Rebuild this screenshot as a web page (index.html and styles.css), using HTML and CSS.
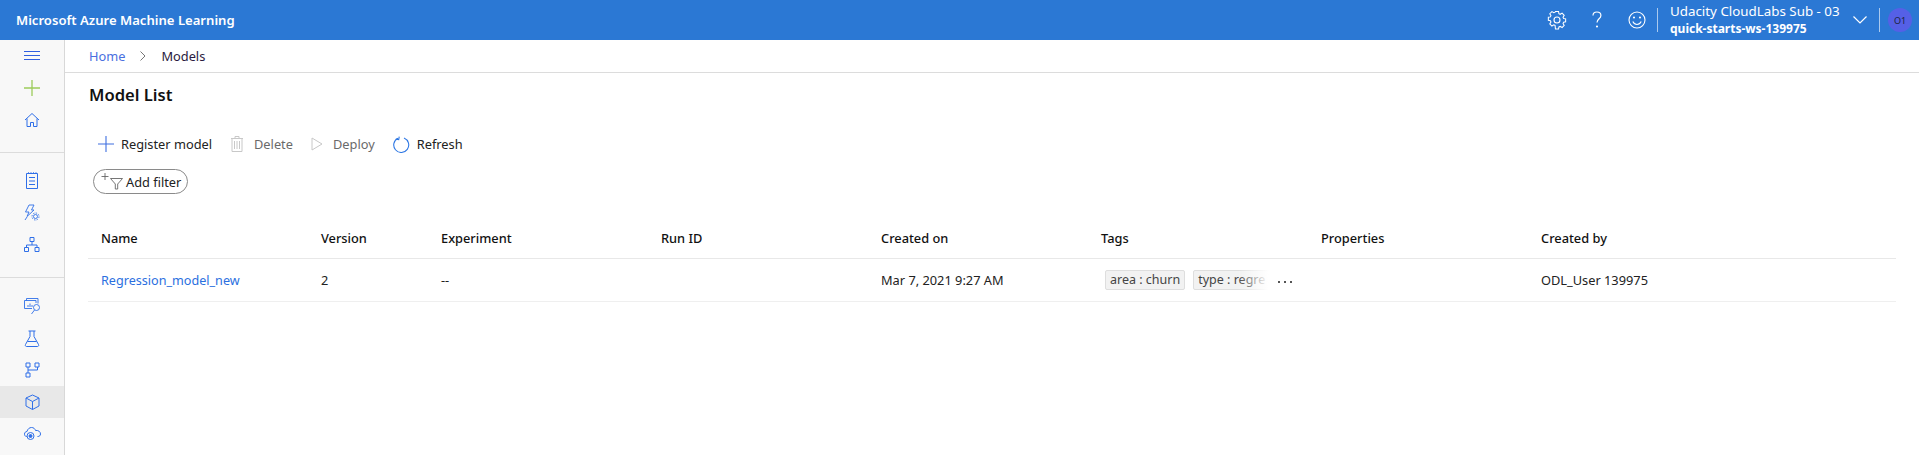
FILE: index.html
```html
<!doctype html>
<html lang="en">
  <head>
    <meta charset="utf-8">
    <title>Model List - Microsoft Azure Machine Learning</title>
    <link rel="stylesheet" href="styles.css">
  </head>
  <body>
    <header class="topbar">
      <div class="brand">Microsoft Azure Machine Learning</div>
      <div class="top-actions">
        <button class="top-icon">
          <svg width="20" height="20" viewBox="0 0 20 20" fill="none" stroke="#fff" stroke-width="1.1"><path d="M8.4 2h3.2l.4 2.3 1.3.6 2-1.2 2.2 2.2-1.2 2 .6 1.3 2.100.4v3.200l-2.100.4-.6 1.300 1.200 2-2.200 2.200-2-1.200-1.300.6-.4 2.100H8.400L8 16.500l-1.300-.6-2 1.200-2.200-2.200 1.200-2-.6-1.300L1 11.200V8l2.100-.4.6-1.300-1.200-2 2.200-2.200 2 1.200L8 2.700z" transform="translate(.4 -.4) scale(.96)"/><circle cx="10" cy="10" r="3"/></svg>
        </button>
        <button class="top-icon">
          <svg width="20" height="20" viewBox="0 0 20 20" fill="none" stroke="#fff" stroke-width="1.200"><path d="M6 5.500C6 3.300 7.700 2 9.900 2c2.300 0 4 1.400 4 3.400 0 3.400-3.900 3.300-3.900 7.100"/><circle cx="10" cy="16.500" r=".5"/></svg>
        </button>
        <button class="top-icon">
          <svg width="20" height="20" viewBox="0 0 20 20" fill="none" stroke="#fff" stroke-width="1.100"><circle cx="10" cy="10" r="8"/><path d="M5.800 11.500c1 2 2.500 3 4.200 3s3.200-1 4.200-3"/><circle cx="7" cy="7.500" r=".5"/><circle cx="13" cy="7.500" r=".5"/></svg>
        </button>
        <div class="top-sep"></div>
        <div class="workspace">
          <div class="sub-name">Udacity CloudLabs Sub - 03</div>
          <div class="ws-name">quick-starts-ws-139975</div>
        </div>
        <svg class="chevron" width="16" height="10" viewBox="0 0 16 10" fill="none" stroke="#fff" stroke-width="1.200"><path d="M1.500 1.500 8 8l6.500-6.500"/></svg>
        <div class="top-sep"></div>
        <div class="avatar">O1</div>
      </div>
    </header>

    <div class="shell">
      <nav class="sidebar">
        <div class="nav-group first">
          <div class="nav-item">
            <svg width="16" height="10" viewBox="0 0 16 10" fill="none" stroke="#2f5fe0"><path d="M0 .500h16M0 4.500h16M0 8.500h16"/></svg>
          </div>
          <div class="nav-item">
            <svg width="18" height="18" viewBox="0 0 18 18" fill="none" stroke="#9ccb5a" stroke-width="1.300"><path d="M9 1v16M1 9h16"/></svg>
          </div>
          <div class="nav-item">
            <svg width="16" height="16" viewBox="0 0 16 16" fill="none" stroke="#2f6fe8"><path d="M1 8 8 1.500 15 8M3 6.500v8h3.500v-4h3v4H13v-8"/></svg>
          </div>
        </div>
        <div class="nav-group">
          <div class="nav-item">
            <svg width="14" height="18" viewBox="0 0 14 18" fill="none" stroke="#2f6fe8"><path d="M1.500 1.500h11v15h-11zM4 5.500h6M4 9h6M4 12.500h6"/><path d="M3.500 0v2M6 0v2M8.500 0v2M11 0v2" stroke-width=".7"/></svg>
          </div>
          <div class="nav-item">
            <svg width="16" height="18" viewBox="0 0 16 18" fill="none" stroke="#2f6fe8" stroke-width=".9"><path d="M5 1h5L7.500 6H10l-7 6.500L5 8H1.500zM3 13l-2 3"/><circle cx="11.500" cy="12.500" r="2"/><circle cx="11.500" cy="12.500" r="3.500" stroke-dasharray="1.500 1.200"/></svg>
          </div>
          <div class="nav-item">
            <svg width="16" height="16" viewBox="0 0 16 16" fill="none" stroke="#2f6fe8"><path d="M6 .5h4v4H6zM.5 10.500h4v4h-4zM11 10.500h4v4h-4zM8 4.500V8M2.500 10.500V8h10.500v2.500"/></svg>
          </div>
        </div>
        <div class="nav-group">
          <div class="nav-item">
            <svg width="17" height="17" viewBox="0 0 17 17" fill="none" stroke="#2f6fe8" stroke-width=".9"><path d="M2.500 2.500V.5H14v5M.5 2.500H12v2.500M.5 2.500v8H8"/><path d="M4 9V7M6 9V5.500M8 9V7"/><circle cx="12.500" cy="9.500" r="3"/><path d="M10.500 12 7.500 16"/></svg>
          </div>
          <div class="nav-item">
            <svg width="16" height="17" viewBox="0 0 16 17" fill="none" stroke="#2f6fe8"><path d="M4.500 1h7M6 1v5.500L1.500 14.500c-.5 1 0 2 1 2h11c1 0 1.500-1 1-2L10 6.500V1M3.500 11.500h9"/></svg>
          </div>
          <div class="nav-item">
            <svg width="15" height="16" viewBox="0 0 15 16" fill="none" stroke="#2f6fe8"><path d="M1 1h4v4H1zM10 1h4v4h-4zM1 11h4v4H1zM3 5v6M3 8h9.500V5"/></svg>
          </div>
          <div class="nav-item active">
            <svg width="15" height="16" viewBox="0 0 15 16" fill="none" stroke="#2f6fe8"><path d="M7.500 1 14 4v8l-6.500 3.500L1 12V4zM1 4l6.500 3.500L14 4M7.500 7.500v8"/></svg>
          </div>
          <div class="nav-item">
            <svg width="17" height="14" viewBox="0 0 17 14" fill="none" stroke="#2f6fe8"><path d="M3 9.500H2.500C1 9.500.5 8 .5 7c0-1.500 1.200-2.500 2.500-2.500C3.500 2 5.500.5 7.500.5c2 0 3.500 1.200 4 3 2.500-.5 5 1 5 3.500 0 1.500-1 2.500-3 2.500"/><circle cx="6.500" cy="9" r="3.500"/><circle cx="6.500" cy="9" r="1.500" fill="#2f6fe8"/></svg>
          </div>
        </div>
      </nav>

      <main class="content">
        <div class="breadcrumb">
          <a class="crumb-link">Home</a>
          <svg width="6" height="10" viewBox="0 0 6 10" fill="none" stroke="#777"><path d="m.5.500 4.500 4.500-4.500 4.500"/></svg>
          <span class="crumb-current">Models</span>
        </div>

        <h1 class="page-title">Model List</h1>

        <div class="toolbar">
          <button class="tool first">
            <svg width="18" height="18" viewBox="0 0 18 18" fill="none" stroke="#3f6fe0" stroke-width="1.100"><path d="M9 1v16M1 9h16"/></svg>
            Register model
          </button>
          <button class="tool disabled">
            <svg width="14" height="16" viewBox="0 0 14 16" fill="none" stroke="#c8c8c8"><path d="M1 2.500h12M2 2.500v13h10v-13M5 2.500V.5h4v2M4.500 5v8M7 5v8M9.500 5v8"/></svg>
            Delete
          </button>
          <button class="tool disabled">
            <svg width="12" height="14" viewBox="0 0 12 14" fill="none" stroke="#c8c8c8"><path d="M1 1 11 7 1 13z"/></svg>
            Deploy
          </button>
          <button class="tool refresh">
            <svg width="17" height="17" viewBox="0 0 17 17" fill="none" stroke="#2f78e4" stroke-width="1.100"><path d="M11 2A7.500 7.500 0 1 1 5 2.200"/><path d="M6 .5v3H3" transform="rotate(10 5 2)"/></svg>
            Refresh
          </button>
        </div>

        <button class="filter-pill">
          <svg width="23" height="17" viewBox="0 0 23 17" fill="none" stroke="#666" stroke-width=".9"><path d="M4 0v7M.5 3.500h7"/><path d="M9.500 5.500h12l-4.800 5.500v5h-2.400v-5z"/></svg>
          Add filter
        </button>

        <div class="table">
          <div class="row head">
            <div class="cell">Name</div>
            <div class="cell">Version</div>
            <div class="cell">Experiment</div>
            <div class="cell">Run ID</div>
            <div class="cell">Created on</div>
            <div class="cell">Tags</div>
            <div class="cell">Properties</div>
            <div class="cell">Created by</div>
          </div>
          <div class="row body">
            <div class="cell"><a class="model-link">Regression_model_new</a></div>
            <div class="cell">2</div>
            <div class="cell">--</div>
            <div class="cell"></div>
            <div class="cell">Mar 7, 2021 9:27 AM</div>
            <div class="cell tags">
              <span class="tag">area : churn</span>
              <span class="tag clipped">type : regre</span>
              <span class="tag-fade"></span>
              <span class="more"><i></i><i></i><i></i></span>
            </div>
            <div class="cell"></div>
            <div class="cell">ODL_User 139975</div>
          </div>
        </div>
      </main>
    </div>
  </body>
</html>
```

FILE: styles.css
```css
* {
  box-sizing: border-box;
}

html, body {
  height: 100%;
}

body {
  margin: 0;
  overflow: hidden;
  font-family: "Noto Sans", "Open Sans", sans-serif;
  font-size: 12.800px;
  color: #222;
  background: #fff;
}

button {
  font: inherit;
  color: inherit;
  background: none;
  border: 0;
  padding: 0;
}

/* Top bar */
.topbar {
  height: 40px;
  background: #2b78d4;
  color: #fff;
  display: flex;
  align-items: center;
  justify-content: space-between;
  padding-left: 16px;
}
.brand {
  font-size: 13.100px;
  font-weight: 600;
}
.top-actions {
  display: flex;
  align-items: center;
}
.top-icon {
  width: 40px;
  height: 40px;
  display: flex;
  align-items: center;
  justify-content: center;
}
.top-sep {
  width: 1px;
  height: 24px;
  background: rgba(255, 255, 255, .6);
}
.workspace {
  width: 194px;
  padding-left: 12px;
  line-height: 18px;
}
.sub-name {
  font-size: 13.350px;
}
.ws-name {
  font-size: 12px;
  font-weight: 700;
}
.chevron {
  margin: 0 11px 0 0;
}
.avatar {
  width: 24px;
  height: 24px;
  margin: 0 7px 0 8px;
  border-radius: 50%;
  background: #5560e6;
  color: #1c2340;
  font-size: 9px;
  display: flex;
  align-items: center;
  justify-content: center;
}

/* Left nav */
.shell {
  display: flex;
  height: 415px;
}
.sidebar {
  width: 65px;
  flex: none;
  background: #f8f8f8;
  border-right: 1px solid #d8d8d8;
}
.nav-group {
  padding: 12px 0 16px;
  border-bottom: 1px solid #dcdcdc;
}
.nav-group.first {
  padding-top: 0;
}
.nav-group:last-child {
  border-bottom: 0;
  padding-bottom: 0;
}
.nav-item {
  height: 32px;
  display: flex;
  align-items: center;
  justify-content: center;
}
.nav-item.active {
  background: #e8e8e8;
}

/* Main */
.content {
  flex: 1;
  min-width: 0;
}
.breadcrumb {
  height: 33px;
  padding-left: 24px;
  border-bottom: 1px solid #dcdcdc;
  display: flex;
  align-items: center;
  gap: 15px;
}
.crumb-link {
  color: #4a6fe0;
}
.crumb-current {
  color: #2a1a40;
}
.page-title {
  margin: 10px 0 0 24px;
  font-size: 16.600px;
  line-height: 24px;
  font-weight: 600;
  color: #111;
}
.toolbar {
  display: flex;
  align-items: center;
  gap: 18px;
  margin: 25px 0 0 32px;
  height: 24px;
}
.tool {
  display: flex;
  align-items: center;
  gap: 10px;
}
.tool.first {
  gap: 6px;
}
.tool.refresh {
  gap: 7px;
}
.tool.disabled {
  color: #6a6a6a;
}
.filter-pill {
  display: flex;
  align-items: center;
  gap: 2px;
  height: 25px;
  width: 95px;
  margin: 13px 0 0 28px;
  padding: 0 0 0 7px;
  border: 1px solid #8a8a8a;
  border-radius: 13px;
}

/* Table */
.table {
  margin: 23px 23px 0 23px;
}
.row {
  display: grid;
  grid-template-columns: 220px 120px 220px 220px 220px 220px 220px 1fr;
  align-items: center;
}
.row.head {
  height: 42px;
  border-bottom: 1px solid #e8e8e8;
  font-weight: 500;
  color: #111;
}
.row.body {
  height: 43px;
  border-bottom: 1px solid #efefef;
}
.cell {
  padding-left: 13px;
  white-space: nowrap;
}
.model-link {
  color: #2b6fe0;
  font-size: 12.600px;
}
.tags {
  display: flex;
  align-items: center;
  gap: 8px;
  position: relative;
  padding-left: 17px;
  width: 220px;
}
.tag {
  height: 20px;
  padding: 0 4px;
  background: #f2f2f2;
  border: 1px solid #dedede;
  border-radius: 2px;
  font-size: 12.500px;
  line-height: 18px;
  color: #444;
  flex: none;
}
.tag.clipped {
  width: 78px;
  overflow: hidden;
}
.tag-fade {
  position: absolute;
  left: 150px;
  top: 0;
  width: 36px;
  height: 100%;
  background: linear-gradient(to right, rgba(255, 255, 255, 0), #fff 85%);
}
/* the three dots after the clipped tags */
.more {
  position: absolute;
  left: 190px;
  top: 11px;
  display: flex;
  gap: 4px;
}
.more i {
  width: 2px;
  height: 2px;
  background: #555;
}
```
